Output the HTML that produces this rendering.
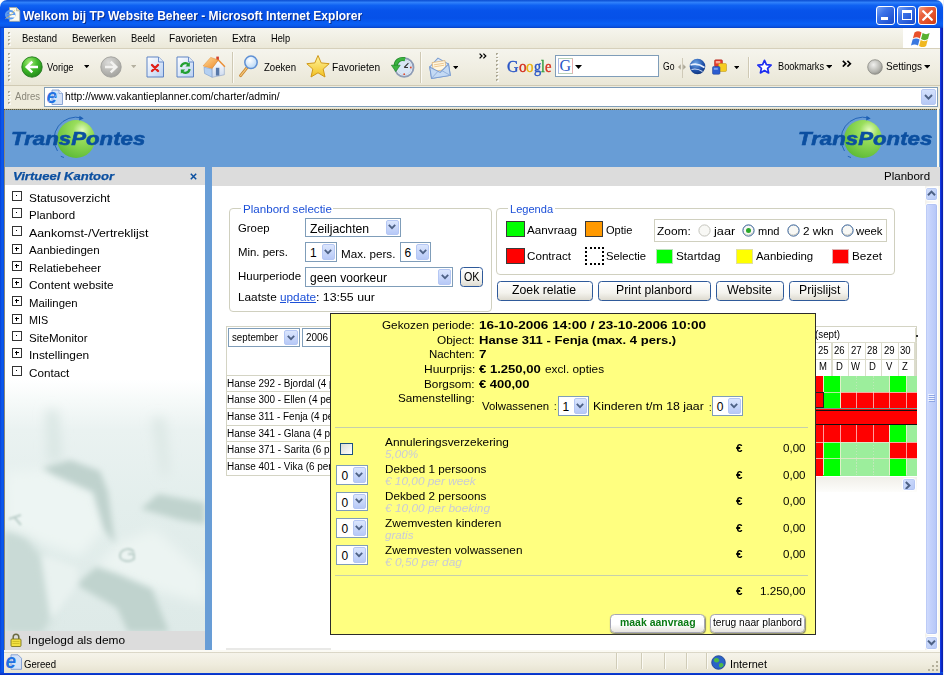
<!DOCTYPE html>
<html>
<head>
<meta charset="utf-8">
<title>Welkom bij TP Website Beheer</title>
<style>
*{box-sizing:border-box;margin:0;padding:0}
html,body{width:944px;height:675px;overflow:hidden;background:#fff}
body{font-family:"Liberation Sans",sans-serif;font-size:11px;color:#000;position:relative}
.a{position:absolute;display:block}
.t{position:absolute;white-space:nowrap;line-height:1;transform-origin:0 0;display:block}
.sel{background:#fff;border:1px solid #7f9db9}
.selb{background:linear-gradient(#dbe6fd,#b7c9f7);border:1px solid #b5c7f4;border-radius:2px}
.btn{background:linear-gradient(#ffffff,#f4f3ee 60%,#dedbd0);border:1px solid #2f5a9a;border-radius:3.5px}
</style>
</head>
<body>
<div class="a" style="left:0px;top:0px;width:943.2px;height:28px;background:linear-gradient(#0a4cd0 0%,#2f80fa 9%,#0f62f2 19%,#0753ea 38%,#0651e8 65%,#0a5ff4 84%,#0a58ea 93%,#0841c4 100%);border-radius:7px 7px 0 0;"></div>
<div class="a" style="left:0px;top:28px;width:4px;height:647px;background:#0a4fe0;background:linear-gradient(90deg,#0a40d4,#0a5cf0 50%,#0a4ce0);"></div>
<div class="a" style="left:939.5px;top:28px;width:3.7px;height:647px;background:linear-gradient(90deg,#1a44f0 0,#0c2cd0 35%,#0a1ca4 100%);"></div>
<div class="a" style="left:943.2px;top:0px;width:0.8px;height:675px;background:#eceef6;"></div>
<div class="a" style="left:0px;top:672.4px;width:943.2px;height:2.6px;background:linear-gradient(#0a50e8,#0a2cc0);"></div>
<svg class="a" style="left:4px;top:5px;" width="18" height="18" viewBox="0 0 18 18"><path d="M5.500 2.500h7l3.300 3.300v10.500h-10.300z" fill="#fbfaf0" stroke="#a8a896" stroke-width=".8"/>
<path d="M12.500 2.500v3.300h3.300" fill="#e4e0c8" stroke="#a8a896" stroke-width=".7"/>
<ellipse cx="6.200" cy="9.800" rx="4.300" ry="3.700" fill="#fbfaf0" fill-opacity=".25" stroke="#5c9cf0" stroke-width="2"/>
<path d="M2.300 9.800h8" stroke="#5c9cf0" stroke-width="1.500"/>
<path d="M7.500 12.500h3.500v-2.500h-3.500z" fill="#fbfaf0"/>
<path d="M1.200 13.800c2.500-1 6.500-4 9.500-8.500" stroke="#f0c040" stroke-width=".8" fill="none" opacity=".8"/></svg>
<span class="t" style="left:23.00px;top:8.80px;font-size:13px;font-weight:bold;color:#fff;transform:scaleX(0.9240);text-shadow:1px 1px 0 #0a2f8c;">Welkom bij TP Website Beheer - Microsoft Internet Explorer</span>
<div class="a" style="left:876px;top:5.5px;width:19px;height:19px;background:linear-gradient(135deg,#7aa4f6 0%,#3c73e8 35%,#2458d6 75%,#1c4cc4 100%);border:1px solid #fff;border-radius:3px;"></div>
<div class="a" style="left:897px;top:5.5px;width:19px;height:19px;background:linear-gradient(135deg,#7aa4f6 0%,#3c73e8 35%,#2458d6 75%,#1c4cc4 100%);border:1px solid #fff;border-radius:3px;"></div>
<div class="a" style="left:918px;top:5.5px;width:19px;height:19px;background:linear-gradient(135deg,#f4a488 0%,#ea6440 30%,#e04c24 70%,#cc3c14 100%);border:1px solid #fff;border-radius:3px;"></div>
<div class="a" style="left:881px;top:17px;width:7px;height:3px;background:#fff;"></div>
<div class="a" style="left:901.5px;top:10px;width:10px;height:10px;border:1px solid #fff;border-top:3px solid #fff;"></div>
<svg class="a" style="left:921px;top:8.5px;" width="13" height="13" viewBox="0 0 13 13"><path d="M2.2 2.2l8.6 8.6M10.8 2.2l-8.6 8.6" stroke="#fff" stroke-width="2.3" stroke-linecap="round"/></svg>
<div class="a" style="left:4px;top:28px;width:936px;height:20px;background:linear-gradient(#f6f5ee,#f0eee2 60%,#ebe8d8);"></div>
<div class="a" style="left:4px;top:48px;width:936px;height:1px;background:#d6d0bb;"></div>
<div class="a" style="left:4px;top:49px;width:936px;height:37px;background:linear-gradient(#f5f4ed,#f0eee2 50%,#e9e6d6);"></div>
<div class="a" style="left:4px;top:85px;width:936px;height:1px;background:#d0cab4;"></div>
<div class="a" style="left:4px;top:86px;width:936px;height:22px;background:#efecdd;"></div>
<div class="a" style="left:8px;top:32px;width:2px;height:13px;background:repeating-linear-gradient(#aca894 0 1.6px,transparent 1.6px 3.75px);"></div>
<div class="a" style="left:9px;top:33px;width:2px;height:13px;background:repeating-linear-gradient(#fff 0 1.6px,transparent 1.6px 3.75px);opacity:.7;z-index:0;"></div>
<div class="a" style="left:8px;top:53px;width:2px;height:29px;background:repeating-linear-gradient(#aca894 0 1.6px,transparent 1.6px 3.75px);"></div>
<div class="a" style="left:9px;top:54px;width:2px;height:29px;background:repeating-linear-gradient(#fff 0 1.6px,transparent 1.6px 3.75px);opacity:.7;z-index:0;"></div>
<div class="a" style="left:8px;top:91px;width:2px;height:13px;background:repeating-linear-gradient(#aca894 0 1.6px,transparent 1.6px 3.75px);"></div>
<div class="a" style="left:9px;top:92px;width:2px;height:13px;background:repeating-linear-gradient(#fff 0 1.6px,transparent 1.6px 3.75px);opacity:.7;z-index:0;"></div>
<span class="t" style="left:22.00px;top:32.69px;font-size:11px;transform:scaleX(0.8682);">Bestand</span>
<span class="t" style="left:72.00px;top:32.69px;font-size:11px;transform:scaleX(0.9009);">Bewerken</span>
<span class="t" style="left:130.50px;top:32.69px;font-size:11px;transform:scaleX(0.8556);">Beeld</span>
<span class="t" style="left:169.00px;top:32.69px;font-size:11px;transform:scaleX(0.9245);">Favorieten</span>
<span class="t" style="left:231.75px;top:32.69px;font-size:11px;transform:scaleX(0.9247);">Extra</span>
<span class="t" style="left:270.50px;top:32.69px;font-size:11px;transform:scaleX(0.8426);">Help</span>
<div class="a" style="left:903px;top:28px;width:37px;height:20px;background:#fff;"></div>
<svg class="a" style="left:911px;top:29px;" width="22" height="18" viewBox="0 0 22 18"><path d="M3.5 3.5c2.5-1.6 4.8-1.4 7 0l-1.6 6c-2.2-1.4-4.5-1.6-7 0z" fill="#e8502a"/>
<path d="M11.6 4c2.2 1.4 4.5 1.6 7 0l-1.6 6c-2.5 1.6-4.8 1.4-7 0z" fill="#58b030"/>
<path d="M1.6 10.6c2.5-1.6 4.8-1.4 7 0l-1.6 6c-2.2-1.4-4.5-1.6-7 0z" fill="#3a78e0"/>
<path d="M9.7 11.1c2.2 1.4 4.5 1.6 7 0l-1.6 6c-2.5 1.6-4.8 1.4-7 0z" fill="#f0b820"/></svg>
<svg class="a" style="left:21px;top:56.4px;" width="22" height="22" viewBox="0 0 22 22"><defs><radialGradient id="gb" cx=".38" cy=".28" r=".85"><stop offset="0" stop-color="#a8ec78"/><stop offset=".45" stop-color="#3fba28"/><stop offset="1" stop-color="#1c7c18"/></radialGradient></defs>
<circle cx="11" cy="11" r="10.200" fill="url(#gb)" stroke="#247a1e" stroke-width=".9"/>
<path d="M17 11h-10.500M11.300 5.600l-5.600 5.400 5.600 5.400" fill="none" stroke="#fff" stroke-width="2.500" stroke-linejoin="miter"/></svg>
<span class="t" style="left:47.00px;top:61.99px;font-size:11px;transform:scaleX(0.8510);">Vorige</span>
<svg class="a" style="left:84px;top:64.5px;" width="5.4" height="3.2" viewBox="0 0 5.4 3.2"><path d="M0 0h5.400l-2.700 3.200z" fill="#000"/></svg>
<svg class="a" style="left:100px;top:56.4px;" width="22" height="22" viewBox="0 0 22 22"><defs><radialGradient id="gf" cx=".38" cy=".28" r=".85"><stop offset="0" stop-color="#dcdcda"/><stop offset=".55" stop-color="#b6b6b2"/><stop offset="1" stop-color="#9a9a96"/></radialGradient></defs>
<circle cx="11" cy="11" r="10.200" fill="url(#gf)" stroke="#a0a09c" stroke-width=".9"/>
<path d="M5 11h10.500M10.700 5.600l5.600 5.400-5.600 5.400" fill="none" stroke="#f2f2f0" stroke-width="2.500" stroke-linejoin="miter"/></svg>
<svg class="a" style="left:131px;top:64.8px;" width="5.4" height="3.2" viewBox="0 0 5.4 3.2"><path d="M0 0h5.400l-2.700 3.200z" fill="#b4b0a0"/></svg>
<svg class="a" style="left:146px;top:56px;" width="19" height="22" viewBox="0 0 19 22"><defs><linearGradient id="pg" x1="0" y1="0" x2="1" y2="1"><stop offset="0" stop-color="#ffffff"/><stop offset="1" stop-color="#b9d0f2"/></linearGradient></defs>
<path d="M1 1h11.5l5 5v15h-16.5z" fill="url(#pg)" stroke="#5f84c4" stroke-width="1"/>
<path d="M12.5 1v5h5" fill="#dfe9fa" stroke="#5f84c4" stroke-width=".9"/>
<path d="M6 9l6 6M12 9l-6 6" stroke="#e0201a" stroke-width="2.4" stroke-linecap="round"/></svg>
<svg class="a" style="left:176px;top:56px;" width="19" height="22" viewBox="0 0 19 22"><path d="M1 1h11.5l5 5v15h-16.5z" fill="url(#pg)" stroke="#5f84c4" stroke-width="1"/>
<path d="M12.5 1v5h5" fill="#dfe9fa" stroke="#5f84c4" stroke-width=".9"/>
<path d="M5 11a4.3 4.3 0 0 1 7.6-2.2" fill="none" stroke="#22a032" stroke-width="2.2"/><path d="M13.8 6.2v4.4h-4.4z" fill="#22a032"/>
<path d="M13.6 13a4.3 4.3 0 0 1-7.6 2.2" fill="none" stroke="#22a032" stroke-width="2.2"/><path d="M4.8 17.8v-4.4h4.4z" fill="#22a032"/></svg>
<svg class="a" style="left:202px;top:55px;" width="24" height="24" viewBox="0 0 24 24"><defs><linearGradient id="rf" x1="0" y1="0" x2="1" y2="1"><stop offset="0" stop-color="#ffdc98"/><stop offset="1" stop-color="#ee8a2a"/></linearGradient>
<linearGradient id="fw" x1="0" y1="0" x2="0" y2="1"><stop offset="0" stop-color="#ffffff"/><stop offset="1" stop-color="#ccd9ee"/></linearGradient></defs>
<rect x="14.300" y="1.600" width="2.600" height="4" fill="#d2402c"/>
<path d="M2 12.200l8.200 1.900v8.200l-7.600-3.800z" fill="#b4d0f2" stroke="#7a9ccc" stroke-width=".6"/>
<path d="M10.200 12.800l6.100-7.400 6 5.900v8.500l-12.100 2.500z" fill="url(#fw)" stroke="#8aa0c4" stroke-width=".6"/>
<rect x="13.900" y="12.800" width="3.400" height="7.800" fill="#5878a8"/>
<path d="M1.100 10.900l7.600-8.500 7.600 2.500-6.100 8.500z" fill="url(#rf)" stroke="#e0882c" stroke-width=".5"/>
<path d="M16.300 4.900l6.600 6.800" stroke="#ea8e34" stroke-width="1.500" fill="none"/></svg>
<div class="a" style="left:232px;top:52px;width:1px;height:31px;background:#cfc9b4;"></div>
<div class="a" style="left:233px;top:52px;width:1px;height:31px;background:#fbfaf5;"></div>
<svg class="a" style="left:238px;top:55px;" width="24" height="24" viewBox="0 0 24 24"><defs><radialGradient id="lens" cx=".4" cy=".35" r=".7"><stop offset="0" stop-color="#ffffff"/><stop offset="1" stop-color="#b4d6f6"/></radialGradient></defs>
<path d="M9 12.600l-6.400 8" stroke="#c8842e" stroke-width="3" stroke-linecap="round"/>
<path d="M9 12.600l-6.400 8" stroke="#f4c678" stroke-width="1.300" stroke-linecap="round"/>
<circle cx="13" cy="7.300" r="6.200" fill="url(#lens)" stroke="#5f90d4" stroke-width="1.500"/></svg>
<span class="t" style="left:264.00px;top:62.19px;font-size:11px;transform:scaleX(0.8736);">Zoeken</span>
<svg class="a" style="left:306px;top:54px;" width="24" height="24" viewBox="0 0 24 24"><defs><linearGradient id="st" x1="0" y1="0" x2="0" y2="1"><stop offset="0" stop-color="#fff6a0"/><stop offset="1" stop-color="#f2c020"/></linearGradient></defs>
<path d="M12 1.5l3.2 7.4 8 .8-6 5.4 1.8 7.9-7-4.2-7 4.2 1.8-7.9-6-5.4 8-.8z" fill="url(#st)" stroke="#d09818" stroke-width="1" stroke-linejoin="round"/></svg>
<span class="t" style="left:332.00px;top:62.19px;font-size:11px;transform:scaleX(0.9245);">Favorieten</span>
<svg class="a" style="left:391px;top:56px;" width="24" height="23" viewBox="0 0 24 23"><circle cx="13.200" cy="11.500" r="9.300" fill="#eef4fb" stroke="#8e9cb6" stroke-width="1.900"/>
<circle cx="13.200" cy="11.500" r="7.300" fill="#d8e6f6" stroke="#c2d0e6" stroke-width=".8"/>
<path d="M13.200 11.500l4.200-4.300M13.200 11.500h3.800" stroke="#333" stroke-width="1.100"/>
<circle cx="13.200" cy="18.200" r=".9" fill="#e04828"/><circle cx="19.800" cy="11.500" r=".9" fill="#e04828"/>
<path d="M14 3.300C8.500 2 4.600 5.500 4.700 10.200" fill="none" stroke="#1f8428" stroke-width="4.200"/>
<path d="M14 3.300C8.500 2 4.600 5.500 4.700 10.200" fill="none" stroke="#3cb440" stroke-width="2.800"/>
<path d="M.4 9.200h8.800l-4.400 6.400z" fill="#3cb440" stroke="#1f8428" stroke-width=".7"/></svg>
<div class="a" style="left:420px;top:52px;width:1px;height:31px;background:#cfc9b4;"></div>
<div class="a" style="left:421px;top:52px;width:1px;height:31px;background:#fbfaf5;"></div>
<svg class="a" style="left:428px;top:56px;" width="23" height="23" viewBox="0 0 23 23"><g transform="rotate(-9 11.500 12)"><path d="M2 9.500l9.500-7.500 9.500 7.500v11.500h-19z" fill="#dce9f8" stroke="#7a9cd0" stroke-width="1"/>
<path d="M5 5.500h13v9h-13z" fill="#fff6e0" stroke="#dcb070" stroke-width=".7"/>
<path d="M6.500 8h10M6.500 10h10" stroke="#ecc48c" stroke-width=".9"/>
<path d="M2 9.500l9.500 7 9.500-7v11.500h-19z" fill="#c4daf4" stroke="#7a9cd0" stroke-width="1"/>
<path d="M2 21l7.500-6M21 21l-7.500-6" stroke="#8aaad8" stroke-width=".8"/></g></svg>
<svg class="a" style="left:453px;top:65.7px;" width="5.4" height="3.2" viewBox="0 0 5.4 3.2"><path d="M0 0h5.400l-2.700 3.200z" fill="#000"/></svg>
<svg class="a" style="left:479px;top:52.8px;" width="8" height="6" viewBox="0 0 8 6"><path d="M.6.600l2.400 2.400-2.400 2.400M4.400.600l2.400 2.400-2.400 2.400" fill="none" stroke="#000" stroke-width="1.250"/></svg>
<div class="a" style="left:496px;top:53px;width:2px;height:29px;background:repeating-linear-gradient(#aca894 0 1.6px,transparent 1.6px 3.75px);"></div>
<div class="a" style="left:497px;top:54px;width:2px;height:29px;background:repeating-linear-gradient(#fff 0 1.6px,transparent 1.6px 3.75px);opacity:.7;z-index:0;"></div>
<span class="t" style="left:507.00px;top:58.10px;font-size:17px;color:#2a56c6;font-family:'Liberation Serif',serif;transform:scaleX(0.9395);-webkit-text-stroke:.4px #2a56c6;">G</span>
<span class="t" style="left:518.50px;top:58.10px;font-size:17px;color:#d4301e;font-family:'Liberation Serif',serif;transform:scaleX(0.8824);-webkit-text-stroke:.4px #d4301e;">o</span>
<span class="t" style="left:526.00px;top:58.10px;font-size:17px;color:#e8b012;font-family:'Liberation Serif',serif;transform:scaleX(0.8824);-webkit-text-stroke:.4px #e8b012;">o</span>
<span class="t" style="left:533.50px;top:58.10px;font-size:17px;color:#2a56c6;font-family:'Liberation Serif',serif;transform:scaleX(0.8471);-webkit-text-stroke:.4px #2a56c6;">g</span>
<span class="t" style="left:540.70px;top:58.10px;font-size:17px;color:#2d9a3c;font-family:'Liberation Serif',serif;transform:scaleX(0.7983);-webkit-text-stroke:.4px #2d9a3c;">l</span>
<span class="t" style="left:544.50px;top:58.10px;font-size:17px;color:#d4301e;font-family:'Liberation Serif',serif;transform:scaleX(0.8592);-webkit-text-stroke:.4px #d4301e;">e</span>
<div class="a" style="left:555px;top:55px;width:104px;height:22px;background:#fff;border:1px solid #7f9db9;"></div>
<div class="a" style="left:558px;top:58px;width:15px;height:16px;background:#fff;border:1px solid #b8d0b8;border-right-color:#e8b0b0;border-left-color:#a8b8e8;"></div>
<span class="t" style="left:559.50px;top:58.44px;font-size:16px;color:#2a56c6;font-family:'Liberation Serif',serif;">G</span>
<svg class="a" style="left:574.5px;top:65px;" width="7" height="4" viewBox="0 0 7 4"><path d="M0 0h7l-3.5 4z" fill="#000"/></svg>
<span class="t" style="left:662.50px;top:61.39px;font-size:11px;transform:scaleX(0.7831);">Go</span>
<div class="a" style="left:681.5px;top:57.5px;width:1px;height:20px;background:#cfcab8;"></div>
<svg class="a" style="left:678px;top:64.3px;" width="8" height="6" viewBox="0 0 8 6"><path d="M0 3l2.800-2.800v5.600zM8 3l-2.800-2.800v5.600z" fill="#aaa696"/></svg>
<svg class="a" style="left:689px;top:58px;" width="17" height="17" viewBox="0 0 17 17"><defs><radialGradient id="gl" cx=".4" cy=".3" r=".8"><stop offset="0" stop-color="#6fa8e8"/><stop offset=".6" stop-color="#1f50a8"/><stop offset="1" stop-color="#0c2c6c"/></radialGradient></defs>
<circle cx="8.5" cy="8.5" r="7.8" fill="url(#gl)"/>
<path d="M1.5 7c4-1.5 9-1 14 2.5" fill="none" stroke="#e8f0ff" stroke-width="1.6"/>
<path d="M2.5 11.5c3-1 7-.5 11 2" fill="none" stroke="#c8d8f4" stroke-width="1.1"/></svg>
<svg class="a" style="left:712px;top:59px;" width="15" height="16" viewBox="0 0 15 16"><rect x="2.500" y=".8" width="8" height="7" rx="1.200" fill="#e23a2c" stroke="#a82418" stroke-width=".5"/>
<rect x="3.800" y="2" width="4.500" height="2.400" fill="#f8a898"/>
<rect x="6.500" y="4.500" width="8" height="8" rx="1.200" fill="#f6cc20" stroke="#b89010" stroke-width=".5"/>
<rect x=".5" y="7.500" width="7.500" height="7.800" rx="1.200" fill="#2c5cd0" stroke="#1c3c90" stroke-width=".5"/>
<rect x="1.800" y="8.800" width="4" height="2" fill="#7ca0f0"/></svg>
<svg class="a" style="left:733.5px;top:65.7px;" width="5.4" height="3.2" viewBox="0 0 5.4 3.2"><path d="M0 0h5.400l-2.700 3.200z" fill="#000"/></svg>
<div class="a" style="left:748px;top:57px;width:1px;height:21px;background:#cfc9b4;"></div>
<div class="a" style="left:749px;top:57px;width:1px;height:21px;background:#fbfaf5;"></div>
<svg class="a" style="left:756.5px;top:58.5px;" width="15" height="15" viewBox="0 0 15 15"><path d="M7.500 1.300l1.900 4.300 4.700.5-3.500 3.200 1 4.600-4.100-2.400-4.100 2.400 1-4.600-3.500-3.200 4.700-.5z" fill="#fff" stroke="#1c2cf0" stroke-width="1.700" stroke-linejoin="round"/></svg>
<span class="t" style="left:778.00px;top:61.29px;font-size:11px;transform:scaleX(0.8364);">Bookmarks</span>
<svg class="a" style="left:826px;top:65.3px;" width="6.4" height="3.6" viewBox="0 0 6.4 3.6"><path d="M0 0h6.400l-3.200 3.600z" fill="#000"/></svg>
<svg class="a" style="left:842px;top:59.8px;" width="10" height="7.5" viewBox="0 0 10 7.5"><path d="M.8.800l3 2.900-3 2.900M5.400.800l3 2.900-3 2.900" fill="none" stroke="#000" stroke-width="1.600"/></svg>
<svg class="a" style="left:867px;top:58.5px;" width="16" height="16" viewBox="0 0 16 16"><defs><radialGradient id="sg" cx=".4" cy=".35" r=".7"><stop offset="0" stop-color="#f0f0ee"/><stop offset=".7" stop-color="#b4b4ae"/><stop offset="1" stop-color="#8c8c86"/></radialGradient></defs>
<circle cx="8" cy="8" r="7.3" fill="url(#sg)" stroke="#8a8a84" stroke-width=".8"/></svg>
<span class="t" style="left:886.00px;top:61.29px;font-size:11px;transform:scaleX(0.9066);">Settings</span>
<svg class="a" style="left:924px;top:65.3px;" width="6.4" height="3.6" viewBox="0 0 6.4 3.6"><path d="M0 0h6.400l-3.200 3.600z" fill="#000"/></svg>
<span class="t" style="left:14.75px;top:91.49px;font-size:11px;color:#8a877a;transform:scaleX(0.8708);">Adres</span>
<div class="a" style="left:44px;top:87px;width:894px;height:20px;background:#fff;border:1px solid #7f9db9;"></div>
<svg class="a" style="left:47px;top:88.5px;" width="17" height="17" viewBox="0 0 17 17"><path d="M5 1h7l3.500 3.500v11h-10.500z" fill="#d4e2f8" stroke="#7f9cd0" stroke-width=".9"/>
<path d="M12 1v3.500h3.500" fill="#eef4fd" stroke="#7f9cd0" stroke-width=".7"/>
<text x="-.5" y="14.300" font-family="Liberation Sans" font-weight="bold" font-style="italic" font-size="21" fill="#2271e2" textLength="10.5" lengthAdjust="spacingAndGlyphs">e</text>
<path d="M.8 12.500c3-.5 7-3.500 9.500-8" stroke="#9cc4f8" stroke-width=".9" fill="none"/></svg>
<span class="t" style="left:65.00px;top:91.49px;font-size:11px;transform:scaleX(0.9410);">http://www.vakantieplanner.com/charter/admin/</span>
<div class="a" style="left:921px;top:88.8px;width:14.5px;height:16px;background:linear-gradient(#d4e1fd,#b6c9f6);border:1px solid #b7c8f2;border-radius:2px;"></div>
<svg class="a" style="left:924px;top:94px;" width="9" height="7" viewBox="0 0 9 7"><path d="M1 1l3.5 3.6L8 1" fill="none" stroke="#4d6185" stroke-width="1.9"/></svg>
<div class="a" style="left:4px;top:650px;width:936px;height:1.5px;background:#fbfaf4;"></div>
<div class="a" style="left:4px;top:651.5px;width:936px;height:21px;background:linear-gradient(#cfcab6 0,#f5f3ea 1.500px,#efecdd 60%,#e6e2d0);"></div>
<svg class="a" style="left:5.5px;top:653.5px;" width="17" height="16" viewBox="0 0 17 16"><path d="M5 .8h7l3.500 3.500v11h-10.500z" fill="#d4e2f8" stroke="#7f9cd0" stroke-width=".9"/>
<text x="-.5" y="14" font-family="Liberation Sans" font-weight="bold" font-style="italic" font-size="21" fill="#2271e2" textLength="10.5" lengthAdjust="spacingAndGlyphs">e</text></svg>
<span class="t" style="left:23.80px;top:658.69px;font-size:11px;transform:scaleX(0.8723);">Gereed</span>
<div class="a" style="left:616px;top:653px;width:1px;height:16px;background:#d0ccb8;"></div>
<div class="a" style="left:617px;top:653px;width:1px;height:16px;background:#fbfaf4;"></div>
<div class="a" style="left:640.5px;top:653px;width:1px;height:16px;background:#d0ccb8;"></div>
<div class="a" style="left:641.5px;top:653px;width:1px;height:16px;background:#fbfaf4;"></div>
<div class="a" style="left:663.5px;top:653px;width:1px;height:16px;background:#d0ccb8;"></div>
<div class="a" style="left:664.5px;top:653px;width:1px;height:16px;background:#fbfaf4;"></div>
<div class="a" style="left:686px;top:653px;width:1px;height:16px;background:#d0ccb8;"></div>
<div class="a" style="left:687px;top:653px;width:1px;height:16px;background:#fbfaf4;"></div>
<div class="a" style="left:706px;top:653px;width:1px;height:16px;background:#d0ccb8;"></div>
<div class="a" style="left:707px;top:653px;width:1px;height:16px;background:#fbfaf4;"></div>
<svg class="a" style="left:711px;top:655px;" width="15" height="15" viewBox="0 0 15 15"><circle cx="7.5" cy="7.5" r="6.8" fill="#2a62c8" stroke="#163c8c" stroke-width=".8"/>
<path d="M3 4c2-1.5 4-1 5 .5s-1 3-2.5 3-3-1-2.5-3.5zM8.5 8.5c1.5-1 3.5-.5 4 1s-1.500 3-3 3-2-2.500-1-4z" fill="#4cb848"/></svg>
<span class="t" style="left:730.00px;top:658.69px;font-size:11px;transform:scaleX(0.9908);">Internet</span>
<svg class="a" style="left:928px;top:660.8px;" width="10.5" height="10.5" viewBox="0 0 10.5 10.5"><g fill="#b4b09c"><rect x="8" y="8" width="2" height="2"/><rect x="4" y="8" width="2" height="2"/><rect x="8" y="4" width="2" height="2"/><rect x="0" y="8" width="2" height="2"/><rect x="4" y="4" width="2" height="2"/><rect x="8" y="0" width="2" height="2"/></g></svg>
<div class="a" style="left:4px;top:108px;width:936px;height:1px;background:#e4e0cc;"></div>
<div class="a" style="left:4px;top:109px;width:936px;height:1px;background:repeating-linear-gradient(90deg,#55553f 0 1px,#9a967c 1px 2px);"></div>
<div class="a" style="left:4px;top:110px;width:936px;height:57px;background:#689dd6;"></div>
<div class="a" style="left:4px;top:110px;width:1px;height:540px;background:#8a8a7a;"></div>
<svg class="a" style="left:52px;top:115px;" width="48" height="48" viewBox="0 0 48 48"><defs><radialGradient id="lg76" cx=".66" cy=".27" r=".8"><stop offset="0" stop-color="#e4fbc0"/><stop offset=".3" stop-color="#9ade5c"/><stop offset="1" stop-color="#5cba36"/></radialGradient></defs>
<circle cx="24" cy="24" r="19" fill="url(#lg76)"/>
<path d="M5.500 36A22 22 0 0 1 30 3" fill="none" stroke="#1d5fb4" stroke-width=".9"/>
<path d="M27.5 .8l4.200 2.600-4.600 2z" fill="#1d5fb4"/>
<path d="M12 42.500l-3.200-1.200" stroke="#1d5fb4" stroke-width=".9"/></svg>
<span class="t" style="left:10.50px;top:131.09px;font-size:17.5px;font-weight:bold;font-style:italic;color:#0b4fa0;transform:scaleX(1.2704);-webkit-text-stroke:.55px #0b4fa0;">TransPontes</span>
<svg class="a" style="left:839px;top:115px;" width="48" height="48" viewBox="0 0 48 48"><defs><radialGradient id="lg863" cx=".66" cy=".27" r=".8"><stop offset="0" stop-color="#e4fbc0"/><stop offset=".3" stop-color="#9ade5c"/><stop offset="1" stop-color="#5cba36"/></radialGradient></defs>
<circle cx="24" cy="24" r="19" fill="url(#lg863)"/>
<path d="M5.500 36A22 22 0 0 1 30 3" fill="none" stroke="#1d5fb4" stroke-width=".9"/>
<path d="M27.5 .8l4.200 2.600-4.600 2z" fill="#1d5fb4"/>
<path d="M12 42.500l-3.200-1.200" stroke="#1d5fb4" stroke-width=".9"/></svg>
<span class="t" style="left:797.50px;top:131.09px;font-size:17.5px;font-weight:bold;font-style:italic;color:#0b4fa0;transform:scaleX(1.2704);-webkit-text-stroke:.55px #0b4fa0;">TransPontes</span>
<div class="a" style="left:937.3px;top:108px;width:2.2px;height:59px;background:#fbf9ee;"></div>
<div class="a" style="left:5px;top:167px;width:200px;height:18px;background:#dcdcdc;"></div>
<span class="t" style="left:12.50px;top:170.89px;font-size:11px;font-weight:bold;font-style:italic;color:#0b4fa0;transform:scaleX(1.1861);-webkit-text-stroke:.25px #0b4fa0;">Virtueel Kantoor</span>
<svg class="a" style="left:189.5px;top:172.5px;" width="7" height="7" viewBox="0 0 7 7"><path d="M.8.800l5.400 5.400M6.200.800l-5.400 5.400" stroke="#0b4fa0" stroke-width="1.5"/></svg>
<div class="a" style="left:5px;top:185px;width:200px;height:447px;background:#fff;"></div>
<svg class="a" style="left:5px;top:380px;" width="200" height="252" viewBox="0 0 200 252"><defs><linearGradient id="kb" x1="0" y1="0" x2="0" y2="1"><stop offset="0" stop-color="#ffffff"/><stop offset=".08" stop-color="#f6faf9"/><stop offset=".2" stop-color="#eaf2f1"/><stop offset=".5" stop-color="#e3eeec"/><stop offset="1" stop-color="#deeae8"/></linearGradient>
<filter id="bl" x="-30%" y="-30%" width="160%" height="160%"><feGaussianBlur stdDeviation="3.2"/></filter>
<filter id="bl2" x="-30%" y="-30%" width="160%" height="160%"><feGaussianBlur stdDeviation="6"/></filter>
<filter id="bl3" x="-30%" y="-30%" width="160%" height="160%"><feGaussianBlur stdDeviation="1.2"/></filter></defs>
<rect width="200" height="252" fill="url(#kb)"/>
<g filter="url(#bl2)">
<path d="M0 92l38-3 50 23 11 37-24 27-53-19-22-7z" fill="#edf5f3"/>
<path d="M91 187l21-23 37-15 51 45v30l-53-15z" fill="#ecf4f2"/>
<path d="M0 150l22 7 15 18 10 64-7 13h-40z" fill="#cfdfdb"/>
<path d="M41 30l12 0 4 50-14 4z" fill="#d9e6e3"/>
<path d="M147 38l13 0 4 55-7 4z" fill="#dbe7e4"/>
</g>
<g filter="url(#bl)">
<path d="M37 88l28-8 30 11 8 21 7 52-11-15-11-37-39-17z" fill="#bfd2cd"/>
<path d="M136 129l17-15 47 9v21l-25-4z" fill="#c0d3ce"/>
<path d="M73 203l18-16 21 7 35 15 17 43h-41l-11-24-37-21z" fill="#c0d3ce"/>
<path d="M0 152l20 8 14 18 9 60-6 14h-37z" fill="#c9dad6"/>
<path d="M47 239l-10-64 35 12 1 16z" fill="#e9f2f0"/>
</g>
<g filter="url(#bl3)" fill="none" stroke="#bccfca" stroke-width="2">
<path d="M129 172c-4-5-13-3-14 3s9 8 14 4v-5h-6"/>
<path d="M4 139l12-4M9 137l7 8"/>
</g></svg>
<svg class="a" style="left:12.1px;top:191.2px;" width="9.6" height="9.6" viewBox="0 0 9 9"><g shape-rendering="crispEdges"><rect x=".5" y=".5" width="8" height="8" fill="#fff" stroke="#333" stroke-width="1"/><rect x="4" y="4" width="1" height="1" fill="#000"/></g></svg>
<span class="t" style="left:28.75px;top:192.69px;font-size:11px;transform:scaleX(1.0773);">Statusoverzicht</span>
<svg class="a" style="left:12.1px;top:208.2px;" width="9.6" height="9.6" viewBox="0 0 9 9"><g shape-rendering="crispEdges"><rect x=".5" y=".5" width="8" height="8" fill="#fff" stroke="#333" stroke-width="1"/><rect x="4" y="4" width="1" height="1" fill="#000"/></g></svg>
<span class="t" style="left:28.75px;top:210.19px;font-size:11px;transform:scaleX(1.0468);">Planbord</span>
<svg class="a" style="left:12.1px;top:226.2px;" width="9.6" height="9.6" viewBox="0 0 9 9"><g shape-rendering="crispEdges"><rect x=".5" y=".5" width="8" height="8" fill="#fff" stroke="#333" stroke-width="1"/><rect x="4" y="4" width="1" height="1" fill="#000"/></g></svg>
<span class="t" style="left:28.75px;top:227.69px;font-size:11px;transform:scaleX(1.1219);">Aankomst-/Vertreklijst</span>
<svg class="a" style="left:12.1px;top:244.2px;" width="9.6" height="9.6" viewBox="0 0 9 9"><g shape-rendering="crispEdges"><rect x=".5" y=".5" width="8" height="8" fill="#fff" stroke="#333" stroke-width="1"/><rect x="2.500" y="4" width="4" height="1" fill="#000"/><rect x="4" y="2.500" width="1" height="4" fill="#000"/></g></svg>
<span class="t" style="left:28.75px;top:245.19px;font-size:11px;transform:scaleX(1.0507);">Aanbiedingen</span>
<svg class="a" style="left:12.1px;top:261.2px;" width="9.6" height="9.6" viewBox="0 0 9 9"><g shape-rendering="crispEdges"><rect x=".5" y=".5" width="8" height="8" fill="#fff" stroke="#333" stroke-width="1"/><rect x="2.500" y="4" width="4" height="1" fill="#000"/><rect x="4" y="2.500" width="1" height="4" fill="#000"/></g></svg>
<span class="t" style="left:28.75px;top:262.69px;font-size:11px;transform:scaleX(1.0532);">Relatiebeheer</span>
<svg class="a" style="left:12.1px;top:278.2px;" width="9.6" height="9.6" viewBox="0 0 9 9"><g shape-rendering="crispEdges"><rect x=".5" y=".5" width="8" height="8" fill="#fff" stroke="#333" stroke-width="1"/><rect x="2.500" y="4" width="4" height="1" fill="#000"/><rect x="4" y="2.500" width="1" height="4" fill="#000"/></g></svg>
<span class="t" style="left:28.75px;top:280.19px;font-size:11px;transform:scaleX(1.0721);">Content website</span>
<svg class="a" style="left:12.1px;top:296.2px;" width="9.6" height="9.6" viewBox="0 0 9 9"><g shape-rendering="crispEdges"><rect x=".5" y=".5" width="8" height="8" fill="#fff" stroke="#333" stroke-width="1"/><rect x="2.500" y="4" width="4" height="1" fill="#000"/><rect x="4" y="2.500" width="1" height="4" fill="#000"/></g></svg>
<span class="t" style="left:28.75px;top:297.69px;font-size:11px;transform:scaleX(1.0326);">Mailingen</span>
<svg class="a" style="left:12.1px;top:314.2px;" width="9.6" height="9.6" viewBox="0 0 9 9"><g shape-rendering="crispEdges"><rect x=".5" y=".5" width="8" height="8" fill="#fff" stroke="#333" stroke-width="1"/><rect x="2.500" y="4" width="4" height="1" fill="#000"/><rect x="4" y="2.500" width="1" height="4" fill="#000"/></g></svg>
<span class="t" style="left:28.75px;top:315.19px;font-size:11px;transform:scaleX(0.9806);">MIS</span>
<svg class="a" style="left:12.1px;top:331.2px;" width="9.6" height="9.6" viewBox="0 0 9 9"><g shape-rendering="crispEdges"><rect x=".5" y=".5" width="8" height="8" fill="#fff" stroke="#333" stroke-width="1"/><rect x="4" y="4" width="1" height="1" fill="#000"/></g></svg>
<span class="t" style="left:28.75px;top:332.69px;font-size:11px;transform:scaleX(1.0521);">SiteMonitor</span>
<svg class="a" style="left:12.1px;top:348.2px;" width="9.6" height="9.6" viewBox="0 0 9 9"><g shape-rendering="crispEdges"><rect x=".5" y=".5" width="8" height="8" fill="#fff" stroke="#333" stroke-width="1"/><rect x="2.500" y="4" width="4" height="1" fill="#000"/><rect x="4" y="2.500" width="1" height="4" fill="#000"/></g></svg>
<span class="t" style="left:28.75px;top:350.19px;font-size:11px;transform:scaleX(1.0801);">Instellingen</span>
<svg class="a" style="left:12.1px;top:366.2px;" width="9.6" height="9.6" viewBox="0 0 9 9"><g shape-rendering="crispEdges"><rect x=".5" y=".5" width="8" height="8" fill="#fff" stroke="#333" stroke-width="1"/><rect x="4" y="4" width="1" height="1" fill="#000"/></g></svg>
<span class="t" style="left:28.75px;top:367.69px;font-size:11px;transform:scaleX(1.0608);">Contact</span>
<div class="a" style="left:5px;top:631px;width:200px;height:19px;background:#dcdcdc;"></div>
<svg class="a" style="left:10px;top:633px;" width="12" height="14" viewBox="0 0 12 14"><path d="M3.200 6.500v-2.500a2.800 2.800 0 0 1 5.600 0v2.500" fill="none" stroke="#6a6a40" stroke-width="1.500"/>
<rect x="1" y="6" width="10" height="7.500" rx="1" fill="#f2e040" stroke="#7a7420" stroke-width=".9"/>
<path d="M2.500 8.500h7M2.500 10.500h7" stroke="#c8b820" stroke-width=".8"/></svg>
<span class="t" style="left:28.00px;top:635.09px;font-size:11px;transform:scaleX(1.0800);">Ingelogd als demo</span>
<div class="a" style="left:205px;top:167px;width:7px;height:483px;background:#689dd6;"></div>
<div class="a" style="left:212px;top:167px;width:728px;height:19px;background:#dcdcdc;"></div>
<span class="t" style="left:884.00px;top:171.09px;font-size:11px;transform:scaleX(1.0468);">Planbord</span>
<div class="a" style="left:212px;top:186px;width:713px;height:464px;background:#fff;"></div>
<div class="a" style="left:226px;top:647.5px;width:105px;height:2.5px;background:#e9e9e7;"></div>
<div class="a" style="left:924.5px;top:186px;width:13.5px;height:464px;background:linear-gradient(90deg,#f3f1ec,#fdfdfb);"></div>
<div class="a" style="left:938px;top:186px;width:1.5px;height:464px;background:#fbf9ee;"></div>
<div class="a" style="left:924.5px;top:186.5px;width:13.5px;height:14.5px;background:linear-gradient(135deg,#d6e2fd,#b4c7f6);border:1px solid #fff;border-radius:3px;box-shadow:0 0 0 .5px #aabdf0 inset;"></div>
<svg class="a" style="left:926.75px;top:189.75px;" width="9" height="8" viewBox="0 0 9 8"><path d="M1 5.200l3.500-3.600 3.500 3.600" fill="none" stroke="#4d6185" stroke-width="2"/></svg>
<div class="a" style="left:924.5px;top:635.5px;width:13.5px;height:14.5px;background:linear-gradient(135deg,#d6e2fd,#b4c7f6);border:1px solid #fff;border-radius:3px;box-shadow:0 0 0 .5px #aabdf0 inset;"></div>
<svg class="a" style="left:926.75px;top:638.75px;" width="9" height="8" viewBox="0 0 9 8"><path d="M1 1.600l3.500 3.600 3.500-3.600" fill="none" stroke="#4d6185" stroke-width="2"/></svg>
<div class="a" style="left:924.5px;top:202.5px;width:13.5px;height:432px;background:linear-gradient(90deg,#d2ddfd,#c4d2fc 40%,#b9c9f8 85%,#a8bbf0);border:1px solid #fff;border-radius:3px;box-shadow:0 0 0 .5px #a8baf0 inset;"></div>
<div class="a" style="left:928px;top:394px;width:6px;height:1px;background:#eef3ff;"></div>
<div class="a" style="left:929px;top:395px;width:6px;height:1px;background:#8fa6e4;"></div>
<div class="a" style="left:928px;top:396px;width:6px;height:1px;background:#eef3ff;"></div>
<div class="a" style="left:929px;top:397px;width:6px;height:1px;background:#8fa6e4;"></div>
<div class="a" style="left:928px;top:398px;width:6px;height:1px;background:#eef3ff;"></div>
<div class="a" style="left:929px;top:399px;width:6px;height:1px;background:#8fa6e4;"></div>
<div class="a" style="left:928px;top:400px;width:6px;height:1px;background:#eef3ff;"></div>
<div class="a" style="left:929px;top:401px;width:6px;height:1px;background:#8fa6e4;"></div>
<div class="a" style="left:229px;top:207.8px;width:262.5px;height:104.2px;border:1px solid #d0d0bf;border-radius:4px;"></div>
<div class="a" style="left:240.5px;top:206.8px;width:92.75px;height:3px;background:#fff;"></div>
<span class="t" style="left:242.50px;top:204.49px;font-size:11px;color:#1c50d8;transform:scaleX(1.0533);">Planbord selectie</span>
<div class="a" style="left:496px;top:208px;width:398.5px;height:66.5px;border:1px solid #d0d0bf;border-radius:4px;"></div>
<div class="a" style="left:508px;top:207px;width:47px;height:3px;background:#fff;"></div>
<span class="t" style="left:510.00px;top:204.49px;font-size:11px;color:#1c50d8;transform:scaleX(1.0062);">Legenda</span>
<span class="t" style="left:237.50px;top:222.69px;font-size:11px;transform:scaleX(1.0301);">Groep</span>
<div class="a sel" style="left:305px;top:217.6px;width:95.5px;height:19.7px;"></div>
<div class="a selb" style="left:385.5px;top:219.6px;width:13px;height:15.7px;"></div>
<svg class="a" style="left:388.0px;top:224.45px;" width="8" height="6" viewBox="0 0 8 6"><path d="M.800 .800l3.200 3.300 3.200-3.300" fill="none" stroke="#4d6185" stroke-width="1.800"/></svg>
<span class="t" style="left:310.00px;top:222.51px;font-size:12px;transform:scaleX(1.0190);">Zeiljachten</span>
<span class="t" style="left:237.50px;top:246.89px;font-size:11px;transform:scaleX(1.0342);">Min. pers.</span>
<div class="a sel" style="left:305px;top:242px;width:31.5px;height:19.5px;"></div>
<div class="a selb" style="left:321.5px;top:244px;width:13px;height:15.5px;"></div>
<svg class="a" style="left:324.0px;top:248.75px;" width="8" height="6" viewBox="0 0 8 6"><path d="M.800 .800l3.200 3.300 3.200-3.300" fill="none" stroke="#4d6185" stroke-width="1.800"/></svg>
<span class="t" style="left:310.00px;top:246.81px;font-size:12px;">1</span>
<span class="t" style="left:340.50px;top:248.69px;font-size:11px;transform:scaleX(1.0598);">Max. pers.</span>
<div class="a sel" style="left:399.5px;top:242px;width:31.5px;height:19.5px;"></div>
<div class="a selb" style="left:416.0px;top:244px;width:13px;height:15.5px;"></div>
<svg class="a" style="left:418.5px;top:248.75px;" width="8" height="6" viewBox="0 0 8 6"><path d="M.800 .800l3.200 3.300 3.200-3.300" fill="none" stroke="#4d6185" stroke-width="1.800"/></svg>
<span class="t" style="left:404.50px;top:246.81px;font-size:12px;">6</span>
<span class="t" style="left:237.50px;top:270.89px;font-size:11px;transform:scaleX(1.0423);">Huurperiode</span>
<div class="a sel" style="left:305px;top:266.8px;width:148px;height:19.8px;"></div>
<div class="a selb" style="left:438px;top:268.8px;width:13px;height:15.8px;"></div>
<svg class="a" style="left:440.5px;top:273.7px;" width="8" height="6" viewBox="0 0 8 6"><path d="M.800 .800l3.200 3.300 3.200-3.300" fill="none" stroke="#4d6185" stroke-width="1.800"/></svg>
<span class="t" style="left:310.00px;top:271.76px;font-size:12px;transform:scaleX(1.0042);">geen voorkeur</span>
<div class="a btn" style="left:460px;top:266.5px;width:23px;height:20.5px;"></div>
<span class="t" style="left:463.80px;top:271.34px;font-size:12px;transform:scaleX(0.8939);">OK</span>
<span class="t" style="left:237.50px;top:292.39px;font-size:11px;transform:scaleX(1.0725);">Laatste </span>
<span class="t" style="left:279.50px;top:292.39px;font-size:11px;color:#1c50d8;transform:scaleX(1.0713);text-decoration:underline;">update</span>
<span class="t" style="left:315.50px;top:292.39px;font-size:11px;transform:scaleX(1.1209);">: 13:55 uur</span>
<div class="a" style="left:506px;top:221px;width:18.5px;height:16px;background:#00ff00;border:1px solid #3a3a3a;"></div>
<span class="t" style="left:527.00px;top:224.89px;font-size:11px;transform:scaleX(1.0633);">Aanvraag</span>
<div class="a" style="left:585px;top:221px;width:18px;height:16px;background:#ff9900;border:1px solid #3a3a3a;"></div>
<span class="t" style="left:606.00px;top:224.89px;font-size:11px;transform:scaleX(1.0080);">Optie</span>
<div class="a" style="left:506px;top:248px;width:18.5px;height:16px;background:#ff0000;border:1px solid #3a3a3a;"></div>
<span class="t" style="left:527.00px;top:250.69px;font-size:11px;transform:scaleX(1.0582);">Contract</span>
<div class="a" style="left:585px;top:247px;width:18.5px;height:17.5px;background:#fff;border:2px dotted #000;"></div>
<span class="t" style="left:606.00px;top:250.69px;font-size:11px;transform:scaleX(1.0243);">Selectie</span>
<div class="a" style="left:655.5px;top:248.5px;width:17px;height:15.5px;background:#00ff00;border:1px solid #b8e0b8;"></div>
<span class="t" style="left:676.00px;top:250.69px;font-size:11px;transform:scaleX(1.0702);">Startdag</span>
<div class="a" style="left:736px;top:248.5px;width:17px;height:15.5px;background:#ffff00;border:1px solid #e0e0a0;"></div>
<span class="t" style="left:756.00px;top:250.69px;font-size:11px;transform:scaleX(1.0384);">Aanbieding</span>
<div class="a" style="left:832px;top:248.5px;width:17px;height:15.5px;background:#ff0000;border:1px solid #e0b0b0;"></div>
<span class="t" style="left:852.00px;top:250.69px;font-size:11px;transform:scaleX(1.0674);">Bezet</span>
<div class="a" style="left:653.5px;top:218.5px;width:233px;height:23px;border:1px solid #d0d0bf;"></div>
<span class="t" style="left:657.00px;top:225.69px;font-size:11px;transform:scaleX(1.0823);">Zoom:</span>
<svg class="a" style="left:698.0px;top:224.0px;" width="13" height="13" viewBox="0 0 13 13"><circle cx="6.500" cy="6.500" r="5.600" fill="#f8f8f5" stroke="#c4c4bc" stroke-width="1"/></svg>
<span class="t" style="left:713.75px;top:225.69px;font-size:11px;transform:scaleX(1.1603);">jaar</span>
<svg class="a" style="left:741.5px;top:224.0px;" width="13" height="13" viewBox="0 0 13 13"><circle cx="6.500" cy="6.500" r="5.600" fill="#f8f8f5" stroke="#2c5890" stroke-width="1"/><path d="M2.500 9.500a5 5 0 0 0 8-1" fill="none" stroke="#c8c8c0" stroke-width="1"/><circle cx="6.500" cy="6.500" r="2.500" fill="#2aa82a"/></svg>
<span class="t" style="left:757.50px;top:225.69px;font-size:11px;transform:scaleX(1.0049);">mnd</span>
<svg class="a" style="left:786.5px;top:224.0px;" width="13" height="13" viewBox="0 0 13 13"><circle cx="6.500" cy="6.500" r="5.600" fill="#f8f8f5" stroke="#2c5890" stroke-width="1"/><path d="M2.500 9.500a5 5 0 0 0 8-1" fill="none" stroke="#c8c8c0" stroke-width="1"/></svg>
<span class="t" style="left:802.50px;top:225.69px;font-size:11px;transform:scaleX(1.0623);">2 wkn</span>
<svg class="a" style="left:840.5px;top:224.0px;" width="13" height="13" viewBox="0 0 13 13"><circle cx="6.500" cy="6.500" r="5.600" fill="#f8f8f5" stroke="#2c5890" stroke-width="1"/><path d="M2.500 9.500a5 5 0 0 0 8-1" fill="none" stroke="#c8c8c0" stroke-width="1"/></svg>
<span class="t" style="left:856.00px;top:225.69px;font-size:11px;transform:scaleX(1.0339);">week</span>
<div class="a btn" style="left:497px;top:280.5px;width:95.5px;height:20px;"></div>
<span class="t" style="left:512.00px;top:284.36px;font-size:12px;transform:scaleX(1.0217);">Zoek relatie</span>
<div class="a btn" style="left:598px;top:280.5px;width:112.5px;height:20px;"></div>
<span class="t" style="left:616.00px;top:284.36px;font-size:12px;transform:scaleX(1.0182);">Print planbord</span>
<div class="a btn" style="left:716px;top:280.5px;width:68px;height:20px;"></div>
<span class="t" style="left:727.00px;top:284.36px;font-size:12px;transform:scaleX(1.0389);">Website</span>
<div class="a btn" style="left:789px;top:280.5px;width:60px;height:20px;"></div>
<span class="t" style="left:798.75px;top:284.36px;font-size:12px;transform:scaleX(1.0170);">Prijslijst</span>
<div class="a" style="left:226px;top:326px;width:691px;height:149.5px;background:#fff;border:1px solid #d4d4c4;"></div>
<div class="a sel" style="left:228px;top:328px;width:71.5px;height:18.5px;"></div>
<div class="a selb" style="left:284px;top:330px;width:13.5px;height:14.5px;"></div>
<svg class="a" style="left:286.8px;top:334.5px;" width="8" height="6" viewBox="0 0 8 6"><path d="M.800 .800l3.200 3.300 3.200-3.300" fill="none" stroke="#4d6185" stroke-width="1.800"/></svg>
<span class="t" style="left:232.00px;top:332.54px;font-size:10px;transform:scaleX(0.9735);">september</span>
<div class="a sel" style="left:302px;top:328px;width:60px;height:18.5px;"></div>
<span class="t" style="left:306.00px;top:332.54px;font-size:10px;transform:scaleX(0.9910);">2006</span>
<div class="a" style="left:226px;top:374.8px;width:590px;height:1px;background:#d4d4c4;"></div>
<span class="t" style="left:226.80px;top:378.64px;font-size:10px;transform:scaleX(.992);">Hanse 292 - Bjordal (4 pers.)</span>
<div class="a" style="left:226px;top:391.45px;width:590px;height:1px;background:#d4d4c4;"></div>
<span class="t" style="left:226.80px;top:395.29px;font-size:10px;transform:scaleX(.992);">Hanse 300 - Ellen (4 pers.)</span>
<div class="a" style="left:226px;top:408.1px;width:590px;height:1px;background:#d4d4c4;"></div>
<span class="t" style="left:226.80px;top:411.94px;font-size:10px;transform:scaleX(.992);">Hanse 311 - Fenja (4 pers.)</span>
<div class="a" style="left:226px;top:424.75px;width:590px;height:1px;background:#d4d4c4;"></div>
<span class="t" style="left:226.80px;top:428.59px;font-size:10px;transform:scaleX(.992);">Hanse 341 - Glana (4 pers.)</span>
<div class="a" style="left:226px;top:441.4px;width:590px;height:1px;background:#d4d4c4;"></div>
<span class="t" style="left:226.80px;top:445.24px;font-size:10px;transform:scaleX(.992);">Hanse 371 - Sarita (6 pers.)</span>
<div class="a" style="left:226px;top:458.05px;width:590px;height:1px;background:#d4d4c4;"></div>
<span class="t" style="left:226.80px;top:461.89px;font-size:10px;transform:scaleX(.992);">Hanse 401 - Vika (6 pers.)</span>
<div class="a" style="left:816px;top:341.6px;width:101px;height:1.4px;background:#dcdccc;"></div>
<div class="a" style="left:816px;top:358.5px;width:101px;height:1.4px;background:#dcdccc;"></div>
<span class="t" style="left:815.00px;top:329.74px;font-size:10px;transform:scaleX(0.9766);">(sept)</span>
<div class="a" style="left:916px;top:335px;width:1.5px;height:1.5px;background:#333;"></div>
<div class="a" style="left:831.4px;top:328px;width:1.4px;height:47.5px;background:#dcdccc;"></div>
<div class="a" style="left:848px;top:328px;width:1.4px;height:47.5px;background:#dcdccc;"></div>
<div class="a" style="left:864.5px;top:328px;width:1.4px;height:47.5px;background:#dcdccc;"></div>
<div class="a" style="left:880.9px;top:328px;width:1.4px;height:47.5px;background:#dcdccc;"></div>
<div class="a" style="left:897.6px;top:328px;width:1.4px;height:47.5px;background:#dcdccc;"></div>
<div class="a" style="left:914.2px;top:328px;width:1.4px;height:47.5px;background:#dcdccc;"></div>
<div class="a" style="left:816px;top:327.5px;width:99px;height:14px;background:#fff;"></div>
<span class="t" style="left:815.00px;top:329.74px;font-size:10px;transform:scaleX(0.9766);">(sept)</span>
<span class="t" style="left:817.50px;top:345.64px;font-size:10px;transform:scaleX(0.9550);">25</span>
<span class="t" style="left:818.83px;top:362.44px;font-size:10px;transform:scaleX(0.9500);">M</span>
<span class="t" style="left:834.00px;top:345.64px;font-size:10px;transform:scaleX(0.9550);">26</span>
<span class="t" style="left:835.88px;top:362.44px;font-size:10px;transform:scaleX(0.9500);">D</span>
<span class="t" style="left:850.50px;top:345.64px;font-size:10px;transform:scaleX(0.9550);">27</span>
<span class="t" style="left:851.31px;top:362.44px;font-size:10px;transform:scaleX(0.9500);">W</span>
<span class="t" style="left:867.00px;top:345.64px;font-size:10px;transform:scaleX(0.9550);">28</span>
<span class="t" style="left:868.88px;top:362.44px;font-size:10px;transform:scaleX(0.9500);">D</span>
<span class="t" style="left:883.50px;top:345.64px;font-size:10px;transform:scaleX(0.9550);">29</span>
<span class="t" style="left:885.64px;top:362.44px;font-size:10px;transform:scaleX(0.9500);">V</span>
<span class="t" style="left:900.00px;top:345.64px;font-size:10px;transform:scaleX(0.9550);">30</span>
<span class="t" style="left:902.40px;top:362.44px;font-size:10px;transform:scaleX(0.9500);">Z</span>
<div class="a" style="left:816px;top:375.7px;width:7.599999999999954px;height:16.8px;background:#ff0000;"></div>
<div class="a" style="left:823.3px;top:375.7px;width:17.000000000000046px;height:16.8px;background:#00ff00;"></div>
<div class="a" style="left:840px;top:375.7px;width:16.8px;height:16.8px;background:#9cee9c;"></div>
<div class="a" style="left:856.5px;top:375.7px;width:16.900000000000023px;height:16.8px;background:#9cee9c;"></div>
<div class="a" style="left:873.1px;top:375.7px;width:16.900000000000023px;height:16.8px;background:#9cee9c;"></div>
<div class="a" style="left:889.7px;top:375.7px;width:16.89999999999991px;height:16.8px;background:#00ff00;"></div>
<div class="a" style="left:906.3px;top:375.7px;width:11.200000000000092px;height:16.8px;background:#9cee9c;"></div>
<div class="a" style="left:816px;top:392.2px;width:7.599999999999954px;height:16.900000000000023px;background:#ff0000;"></div>
<div class="a" style="left:823.3px;top:392.2px;width:17.000000000000046px;height:16.900000000000023px;background:#00ff00;"></div>
<div class="a" style="left:840px;top:392.2px;width:16.8px;height:16.900000000000023px;background:#ff0000;"></div>
<div class="a" style="left:856.5px;top:392.2px;width:16.900000000000023px;height:16.900000000000023px;background:#ff0000;"></div>
<div class="a" style="left:873.1px;top:392.2px;width:16.900000000000023px;height:16.900000000000023px;background:#ff0000;"></div>
<div class="a" style="left:889.7px;top:392.2px;width:16.89999999999991px;height:16.900000000000023px;background:#ff0000;"></div>
<div class="a" style="left:906.3px;top:392.2px;width:11.200000000000092px;height:16.900000000000023px;background:#ff0000;"></div>
<div class="a" style="left:816px;top:408.8px;width:7.599999999999954px;height:16.899999999999967px;background:#ff0000;"></div>
<div class="a" style="left:823.3px;top:408.8px;width:17.000000000000046px;height:16.899999999999967px;background:#ff0000;"></div>
<div class="a" style="left:840px;top:408.8px;width:16.8px;height:16.899999999999967px;background:#ff0000;"></div>
<div class="a" style="left:856.5px;top:408.8px;width:16.900000000000023px;height:16.899999999999967px;background:#ff0000;"></div>
<div class="a" style="left:873.1px;top:408.8px;width:16.900000000000023px;height:16.899999999999967px;background:#ff0000;"></div>
<div class="a" style="left:889.7px;top:408.8px;width:16.89999999999991px;height:16.899999999999967px;background:#ff0000;"></div>
<div class="a" style="left:906.3px;top:408.8px;width:11.200000000000092px;height:16.899999999999967px;background:#ff0000;"></div>
<div class="a" style="left:816px;top:425.4px;width:7.599999999999954px;height:17.100000000000012px;background:#ff0000;"></div>
<div class="a" style="left:823.3px;top:425.4px;width:17.000000000000046px;height:17.100000000000012px;background:#ff0000;"></div>
<div class="a" style="left:840px;top:425.4px;width:16.8px;height:17.100000000000012px;background:#ff0000;"></div>
<div class="a" style="left:856.5px;top:425.4px;width:16.900000000000023px;height:17.100000000000012px;background:#ff0000;"></div>
<div class="a" style="left:873.1px;top:425.4px;width:16.900000000000023px;height:17.100000000000012px;background:#ff0000;"></div>
<div class="a" style="left:889.7px;top:425.4px;width:16.89999999999991px;height:17.100000000000012px;background:#00ff00;"></div>
<div class="a" style="left:906.3px;top:425.4px;width:11.200000000000092px;height:17.100000000000012px;background:#9cee9c;"></div>
<div class="a" style="left:816px;top:442.2px;width:7.599999999999954px;height:16.8px;background:#ff0000;"></div>
<div class="a" style="left:823.3px;top:442.2px;width:17.000000000000046px;height:16.8px;background:#00ff00;"></div>
<div class="a" style="left:840px;top:442.2px;width:16.8px;height:16.8px;background:#9cee9c;"></div>
<div class="a" style="left:856.5px;top:442.2px;width:16.900000000000023px;height:16.8px;background:#9cee9c;"></div>
<div class="a" style="left:873.1px;top:442.2px;width:16.900000000000023px;height:16.8px;background:#9cee9c;"></div>
<div class="a" style="left:889.7px;top:442.2px;width:16.89999999999991px;height:16.8px;background:#ff0000;"></div>
<div class="a" style="left:906.3px;top:442.2px;width:11.200000000000092px;height:16.8px;background:#ff0000;"></div>
<div class="a" style="left:816px;top:458.7px;width:7.599999999999954px;height:16.900000000000023px;background:#ff0000;"></div>
<div class="a" style="left:823.3px;top:458.7px;width:17.000000000000046px;height:16.900000000000023px;background:#00ff00;"></div>
<div class="a" style="left:840px;top:458.7px;width:16.8px;height:16.900000000000023px;background:#9cee9c;"></div>
<div class="a" style="left:856.5px;top:458.7px;width:16.900000000000023px;height:16.900000000000023px;background:#9cee9c;"></div>
<div class="a" style="left:873.1px;top:458.7px;width:16.900000000000023px;height:16.900000000000023px;background:#9cee9c;"></div>
<div class="a" style="left:889.7px;top:458.7px;width:16.89999999999991px;height:16.900000000000023px;background:#00ff00;"></div>
<div class="a" style="left:906.3px;top:458.7px;width:11.200000000000092px;height:16.900000000000023px;background:#9cee9c;"></div>
<div class="a" style="left:822.8px;top:375.7px;width:1px;height:16.5px;background:#e0f0c8;"></div>
<div class="a" style="left:839.5px;top:375.7px;width:1px;height:16.5px;background:#e0f0c8;"></div>
<div class="a" style="left:856.0px;top:375.7px;width:1px;height:16.5px;background:repeating-linear-gradient(#c8e8c0 0 1.5px,transparent 1.5px 3px);opacity:.8;"></div>
<div class="a" style="left:872.6px;top:375.7px;width:1px;height:16.5px;background:repeating-linear-gradient(#c8e8c0 0 1.5px,transparent 1.5px 3px);opacity:.8;"></div>
<div class="a" style="left:889.2px;top:375.7px;width:1px;height:16.5px;background:#e0f0c8;"></div>
<div class="a" style="left:905.8px;top:375.7px;width:1px;height:16.5px;background:#e0f0c8;"></div>
<div class="a" style="left:822.8px;top:392.2px;width:1px;height:16.600000000000023px;background:#e0f0c8;"></div>
<div class="a" style="left:839.5px;top:392.2px;width:1px;height:16.600000000000023px;background:#e0f0c8;"></div>
<div class="a" style="left:856.0px;top:392.2px;width:1px;height:16.600000000000023px;background:#ff9c9c;"></div>
<div class="a" style="left:872.6px;top:392.2px;width:1px;height:16.600000000000023px;background:#ff9c9c;"></div>
<div class="a" style="left:889.2px;top:392.2px;width:1px;height:16.600000000000023px;background:#ff9c9c;"></div>
<div class="a" style="left:905.8px;top:392.2px;width:1px;height:16.600000000000023px;background:#ff9c9c;"></div>
<div class="a" style="left:816px;top:391.7px;width:101.2px;height:1px;background:#f0e4d4;opacity:.75;"></div>
<div class="a" style="left:822.8px;top:425.4px;width:1px;height:16.80000000000001px;background:#ff9c9c;"></div>
<div class="a" style="left:839.5px;top:425.4px;width:1px;height:16.80000000000001px;background:#ff9c9c;"></div>
<div class="a" style="left:856.0px;top:425.4px;width:1px;height:16.80000000000001px;background:#ff9c9c;"></div>
<div class="a" style="left:872.6px;top:425.4px;width:1px;height:16.80000000000001px;background:#ff9c9c;"></div>
<div class="a" style="left:889.2px;top:425.4px;width:1px;height:16.80000000000001px;background:#e0f0c8;"></div>
<div class="a" style="left:905.8px;top:425.4px;width:1px;height:16.80000000000001px;background:#e0f0c8;"></div>
<div class="a" style="left:822.8px;top:442.2px;width:1px;height:16.5px;background:#e0f0c8;"></div>
<div class="a" style="left:839.5px;top:442.2px;width:1px;height:16.5px;background:#e0f0c8;"></div>
<div class="a" style="left:856.0px;top:442.2px;width:1px;height:16.5px;background:repeating-linear-gradient(#c8e8c0 0 1.5px,transparent 1.5px 3px);opacity:.8;"></div>
<div class="a" style="left:872.6px;top:442.2px;width:1px;height:16.5px;background:repeating-linear-gradient(#c8e8c0 0 1.5px,transparent 1.5px 3px);opacity:.8;"></div>
<div class="a" style="left:889.2px;top:442.2px;width:1px;height:16.5px;background:#e0f0c8;"></div>
<div class="a" style="left:905.8px;top:442.2px;width:1px;height:16.5px;background:#ff9c9c;"></div>
<div class="a" style="left:816px;top:441.7px;width:101.2px;height:1px;background:#f0e4d4;opacity:.75;"></div>
<div class="a" style="left:822.8px;top:458.7px;width:1px;height:16.600000000000023px;background:#e0f0c8;"></div>
<div class="a" style="left:839.5px;top:458.7px;width:1px;height:16.600000000000023px;background:#e0f0c8;"></div>
<div class="a" style="left:856.0px;top:458.7px;width:1px;height:16.600000000000023px;background:repeating-linear-gradient(#c8e8c0 0 1.5px,transparent 1.5px 3px);opacity:.8;"></div>
<div class="a" style="left:872.6px;top:458.7px;width:1px;height:16.600000000000023px;background:repeating-linear-gradient(#c8e8c0 0 1.5px,transparent 1.5px 3px);opacity:.8;"></div>
<div class="a" style="left:889.2px;top:458.7px;width:1px;height:16.600000000000023px;background:#e0f0c8;"></div>
<div class="a" style="left:905.8px;top:458.7px;width:1px;height:16.600000000000023px;background:#e0f0c8;"></div>
<div class="a" style="left:816px;top:458.2px;width:101.2px;height:1px;background:#f0e4d4;opacity:.75;"></div>
<div class="a" style="left:816px;top:408.3px;width:101.2px;height:1.2px;background:#7a9a92;"></div>
<div class="a" style="left:816px;top:409.5px;width:101.2px;height:1.2px;background:#111;"></div>
<div class="a" style="left:816px;top:423.8px;width:101.2px;height:1.4px;background:#111;"></div>
<div class="a" style="left:816px;top:392.4px;width:7.6px;height:16px;border:1.300px solid #222;border-left:0;background:#ff0000;"></div>
<div class="a" style="left:816px;top:476.5px;width:101px;height:15.5px;background:linear-gradient(#f1efe9,#fdfdfb);"></div>
<div class="a" style="left:902px;top:478.3px;width:13.5px;height:13px;background:linear-gradient(135deg,#d6e2fd,#b4c7f6);border:1px solid #fff;border-radius:3px;box-shadow:0 0 0 .5px #aabdf0 inset;"></div>
<svg class="a" style="left:904.25px;top:480.8px;" width="9" height="8" viewBox="0 0 9 8"><path d="M1.800 1l3.600 3.500-3.600 3.500" fill="none" stroke="#4d6185" stroke-width="2"/></svg>
<div class="a" style="left:330px;top:312.7px;width:486px;height:322.8px;background:#ffff80;border:1px solid #2c2c2c;"></div>
<span class="t" style="left:382.25px;top:320.44px;font-size:11px;transform:scaleX(1.0658);">Gekozen periode:</span>
<span class="t" style="left:437.25px;top:334.94px;font-size:11px;transform:scaleX(1.0754);">Object:</span>
<span class="t" style="left:429.00px;top:349.49px;font-size:11px;transform:scaleX(1.0398);">Nachten:</span>
<span class="t" style="left:423.50px;top:363.99px;font-size:11px;transform:scaleX(1.0898);">Huurprijs:</span>
<span class="t" style="left:424.25px;top:378.54px;font-size:11px;transform:scaleX(1.0726);">Borgsom:</span>
<span class="t" style="left:398.00px;top:393.49px;font-size:11px;transform:scaleX(1.0652);">Samenstelling:</span>
<span class="t" style="left:479.00px;top:320.44px;font-size:11px;font-weight:bold;transform:scaleX(1.2335);">16-10-2006 14:00 / 23-10-2006 10:00</span>
<span class="t" style="left:479.00px;top:334.94px;font-size:11px;font-weight:bold;transform:scaleX(1.1858);">Hanse 311 - Fenja (max. 4 pers.)</span>
<span class="t" style="left:479.00px;top:349.49px;font-size:11px;font-weight:bold;transform:scaleX(1.2285);">7</span>
<span class="t" style="left:479.00px;top:363.99px;font-size:11px;font-weight:bold;transform:scaleX(1.1881);">€ 1.250,00</span>
<span class="t" style="left:545.00px;top:363.99px;font-size:11px;transform:scaleX(1.0727);">excl. opties</span>
<span class="t" style="left:479.00px;top:378.54px;font-size:11px;font-weight:bold;transform:scaleX(1.1802);">€ 400,00</span>
<span class="t" style="left:481.50px;top:400.59px;font-size:11px;transform:scaleX(1.0341);">Volwassenen</span>
<span class="t" style="left:554.00px;top:401.19px;font-size:11px;transform:scaleX(0.8117);">:</span>
<div class="a sel" style="left:557.5px;top:396px;width:31px;height:19.5px;"></div>
<div class="a selb" style="left:573.5px;top:398px;width:13px;height:15.5px;"></div>
<svg class="a" style="left:576.0px;top:402.75px;" width="8" height="6" viewBox="0 0 8 6"><path d="M.800 .800l3.200 3.300 3.200-3.300" fill="none" stroke="#4d6185" stroke-width="1.800"/></svg>
<span class="t" style="left:562.50px;top:400.81px;font-size:12px;">1</span>
<span class="t" style="left:593.00px;top:400.99px;font-size:11px;transform:scaleX(1.1181);">Kinderen t/m 18 jaar</span>
<span class="t" style="left:708.50px;top:401.99px;font-size:11px;transform:scaleX(0.8117);">:</span>
<div class="a sel" style="left:711.75px;top:396px;width:31px;height:19.5px;"></div>
<div class="a selb" style="left:727.75px;top:398px;width:13px;height:15.5px;"></div>
<svg class="a" style="left:730.25px;top:402.75px;" width="8" height="6" viewBox="0 0 8 6"><path d="M.800 .800l3.200 3.300 3.200-3.300" fill="none" stroke="#4d6185" stroke-width="1.800"/></svg>
<span class="t" style="left:716.75px;top:400.81px;font-size:12px;">0</span>
<div class="a" style="left:335px;top:426.5px;width:472.5px;height:1px;background:#c6d0ac;"></div>
<div class="a" style="left:335px;top:575px;width:472.5px;height:1px;background:#c6d0ac;"></div>
<span class="t" style="left:384.75px;top:437.09px;font-size:11px;transform:scaleX(1.0781);">Annuleringsverzekering</span>
<span class="t" style="left:384.75px;top:449.19px;font-size:11px;font-style:italic;color:#c9cbd6;transform:scaleX(1.0662);">5,00%</span>
<span class="t" style="left:736.00px;top:443.19px;font-size:11px;font-weight:bold;transform:scaleX(1.0647);">€</span>
<span class="t" style="left:783.00px;top:443.19px;font-size:11px;transform:scaleX(1.0516);">0,00</span>
<div class="a" style="left:340px;top:442.5px;width:12.5px;height:12.5px;background:linear-gradient(135deg,#dcdcd4,#ffffff);border:1px solid #1c5180;"></div>
<span class="t" style="left:384.75px;top:463.79px;font-size:11px;transform:scaleX(1.0623);">Dekbed 1 persoons</span>
<span class="t" style="left:384.75px;top:476.29px;font-size:11px;font-style:italic;color:#c9cbd6;transform:scaleX(1.0756);">€ 10,00 per week</span>
<span class="t" style="left:736.00px;top:469.74px;font-size:11px;font-weight:bold;transform:scaleX(1.0647);">€</span>
<span class="t" style="left:783.00px;top:469.74px;font-size:11px;transform:scaleX(1.0516);">0,00</span>
<div class="a sel" style="left:336px;top:465px;width:31.8px;height:19.5px;"></div>
<div class="a selb" style="left:352.8px;top:467px;width:13px;height:15.5px;"></div>
<svg class="a" style="left:355.3px;top:471.75px;" width="8" height="6" viewBox="0 0 8 6"><path d="M.800 .800l3.200 3.300 3.200-3.300" fill="none" stroke="#4d6185" stroke-width="1.800"/></svg>
<span class="t" style="left:341.50px;top:469.81px;font-size:12px;">0</span>
<span class="t" style="left:384.75px;top:491.29px;font-size:11px;transform:scaleX(1.0623);">Dekbed 2 persoons</span>
<span class="t" style="left:384.75px;top:503.19px;font-size:11px;font-style:italic;color:#c9cbd6;transform:scaleX(1.0804);">€ 10,00 per boeking</span>
<span class="t" style="left:736.00px;top:496.29px;font-size:11px;font-weight:bold;transform:scaleX(1.0647);">€</span>
<span class="t" style="left:783.00px;top:496.29px;font-size:11px;transform:scaleX(1.0516);">0,00</span>
<div class="a sel" style="left:336px;top:491.7px;width:31.8px;height:19.5px;"></div>
<div class="a selb" style="left:352.8px;top:493.7px;width:13px;height:15.5px;"></div>
<svg class="a" style="left:355.3px;top:498.45px;" width="8" height="6" viewBox="0 0 8 6"><path d="M.800 .800l3.200 3.300 3.200-3.300" fill="none" stroke="#4d6185" stroke-width="1.800"/></svg>
<span class="t" style="left:341.50px;top:496.51px;font-size:12px;">0</span>
<span class="t" style="left:384.75px;top:517.99px;font-size:11px;transform:scaleX(1.0811);">Zwemvesten kinderen</span>
<span class="t" style="left:384.75px;top:529.59px;font-size:11px;font-style:italic;color:#c9cbd6;transform:scaleX(1.0597);">gratis</span>
<span class="t" style="left:736.00px;top:522.84px;font-size:11px;font-weight:bold;transform:scaleX(1.0647);">€</span>
<span class="t" style="left:783.00px;top:522.84px;font-size:11px;transform:scaleX(1.0516);">0,00</span>
<div class="a sel" style="left:336px;top:518.4px;width:31.8px;height:19.5px;"></div>
<div class="a selb" style="left:352.8px;top:520.4px;width:13px;height:15.5px;"></div>
<svg class="a" style="left:355.3px;top:525.15px;" width="8" height="6" viewBox="0 0 8 6"><path d="M.800 .800l3.200 3.300 3.200-3.300" fill="none" stroke="#4d6185" stroke-width="1.800"/></svg>
<span class="t" style="left:341.50px;top:523.21px;font-size:12px;">0</span>
<span class="t" style="left:384.75px;top:544.69px;font-size:11px;transform:scaleX(1.0651);">Zwemvesten volwassenen</span>
<span class="t" style="left:384.75px;top:556.59px;font-size:11px;font-style:italic;color:#c9cbd6;transform:scaleX(1.0853);">€ 0,50 per dag</span>
<span class="t" style="left:736.00px;top:549.39px;font-size:11px;font-weight:bold;transform:scaleX(1.0647);">€</span>
<span class="t" style="left:783.00px;top:549.39px;font-size:11px;transform:scaleX(1.0516);">0,00</span>
<div class="a sel" style="left:336px;top:545.4px;width:31.8px;height:19.5px;"></div>
<div class="a selb" style="left:352.8px;top:547.4px;width:13px;height:15.5px;"></div>
<svg class="a" style="left:355.3px;top:552.15px;" width="8" height="6" viewBox="0 0 8 6"><path d="M.800 .800l3.200 3.300 3.200-3.300" fill="none" stroke="#4d6185" stroke-width="1.800"/></svg>
<span class="t" style="left:341.50px;top:550.21px;font-size:12px;">0</span>
<span class="t" style="left:736.00px;top:585.59px;font-size:11px;font-weight:bold;transform:scaleX(1.0647);">€</span>
<span class="t" style="left:760.00px;top:585.59px;font-size:11px;transform:scaleX(1.0633);">1.250,00</span>
<div class="a" style="left:609.8px;top:613.8px;width:95.7px;height:19.2px;background:linear-gradient(#ffffff 55%,#e6e4de);border:1px solid #a6a6b6;border-radius:4.500px;box-shadow:.5px 1px 1px #8c8c6c;"></div>
<span class="t" style="left:620.00px;top:617.49px;font-size:11px;font-weight:bold;color:#0a7a14;transform:scaleX(0.9506);">maak aanvraag</span>
<div class="a" style="left:709.6px;top:613.8px;width:95.9px;height:19.2px;background:linear-gradient(#ffffff 55%,#e6e4de);border:1px solid #a6a6b6;border-radius:4.500px;box-shadow:.5px 1px 1px #8c8c6c;"></div>
<span class="t" style="left:713.00px;top:618.33px;font-size:10px;transform:scaleX(1.0201);">terug naar planbord</span>
</body>
</html>
